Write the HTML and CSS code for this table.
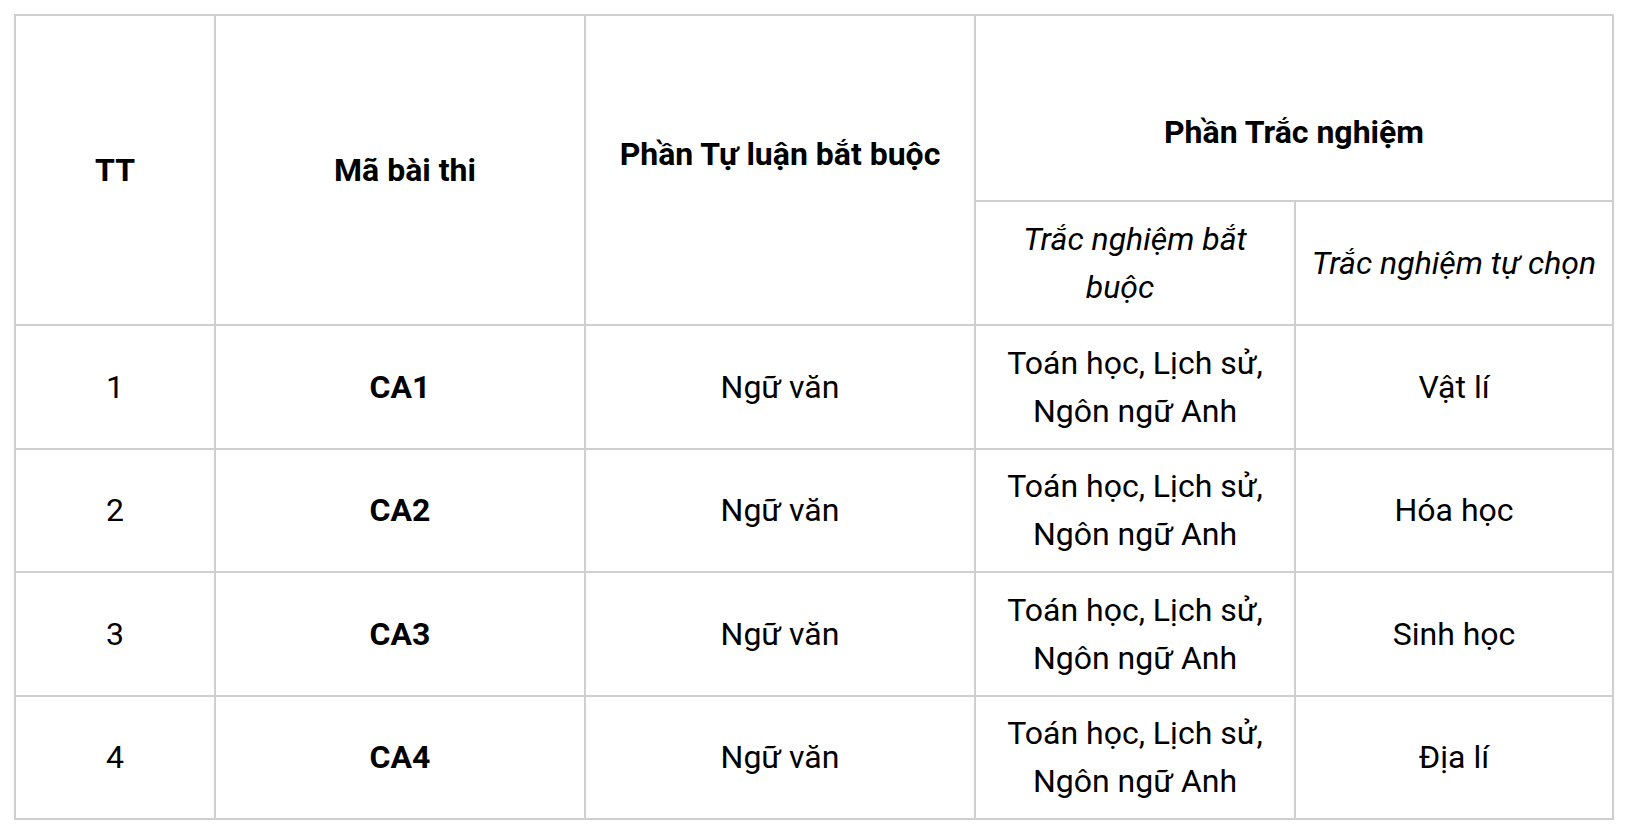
FILE: index.html
```html
<!DOCTYPE html>
<html lang="vi">
<head>
<meta charset="utf-8">
<link rel="stylesheet" href="styles.css">
</head>
<body>
<div class="wrap">
<table class="exam">
  <colgroup>
    <col class="c1"><col class="c2"><col class="c3"><col class="c4"><col class="c5">
  </colgroup>
  <thead>
    <tr class="h1">
      <th rowspan="2">TT</th>
      <th rowspan="2" class="codehead">Mã bài thi</th>
      <th rowspan="2" class="essay">Phần Tự luận bắt buộc</th>
      <th colspan="2" class="mc">Phần Trắc nghiệm</th>
    </tr>
    <tr class="h2">
      <td class="sub">Trắc nghiệm bắt<br><span class="shift">buộc</span></td>
      <td class="sub">Trắc nghiệm tự chọn</td>
    </tr>
  </thead>
  <tbody>
    <tr>
      <td>1</td><td class="code">CA1</td><td>Ngữ văn</td>
      <td>Toán học, Lịch sử,<br>Ngôn ngữ Anh</td><td>Vật lí</td>
    </tr>
    <tr>
      <td>2</td><td class="code">CA2</td><td>Ngữ văn</td>
      <td>Toán học, Lịch sử,<br>Ngôn ngữ Anh</td><td>Hóa học</td>
    </tr>
    <tr>
      <td>3</td><td class="code">CA3</td><td>Ngữ văn</td>
      <td>Toán học, Lịch sử,<br>Ngôn ngữ Anh</td><td>Sinh học</td>
    </tr>
    <tr>
      <td>4</td><td class="code">CA4</td><td>Ngữ văn</td>
      <td>Toán học, Lịch sử,<br>Ngôn ngữ Anh</td><td>Địa lí</td>
    </tr>
  </tbody>
</table>
</div>
</body>
</html>
```

FILE: styles.css
```css
html, body {
  margin: 0;
  padding: 0;
  background: #ffffff;
}

.wrap {
  padding: 14px 0 0 14px;
}

.exam {
  border-collapse: collapse;
  table-layout: fixed;
  width: 1598px;
  font-family: Roboto, "Liberation Sans", sans-serif;
  font-size: 32px;
  line-height: 48px;
  color: #000000;
}

.c1 { width: 200px; }
.c2 { width: 370px; }
.c3 { width: 390px; }
.c4 { width: 320px; }
.c5 { width: 318px; }

.exam th,
.exam td {
  border: 2px solid #cfcfcf;
  text-align: center;
  vertical-align: middle;
  padding: 0 4px;
  font-weight: 400;
}

.exam th {
  font-weight: 700;
}

.exam .h1 { height: 186px; }
.exam .h2 { height: 124px; }
.exam tbody tr { height: 123.5px; }

.exam th.codehead {
  padding-left: 14px;
}

.exam th.essay {
  padding-bottom: 32px;
}

.exam th.mc {
  padding-top: 48px;
}

.exam td.sub {
  font-style: italic;
}

.exam .shift {
  display: inline-block;
  margin-right: 30px;
}

.exam td.code {
  font-weight: 700;
}
```
